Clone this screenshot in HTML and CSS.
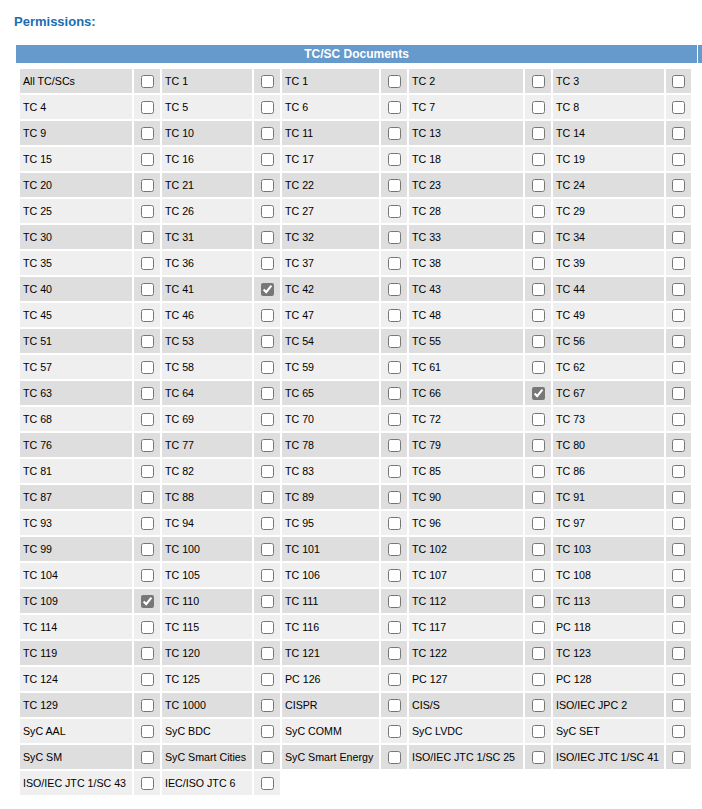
FILE: index.html
```html
<!DOCTYPE html>
<html lang="en">
<head>
    <meta charset="UTF-8">
    <title>Permissions</title>
    <link rel="stylesheet" href="styles.css">
</head>
<body>
    <h2 class="perm-title">Permissions:</h2>

    <div class="doc-head-row">
        <div class="doc-head">TC/SC Documents</div>
        <div class="doc-head-tail"></div>
    </div>

    <!-- TC/SC document permissions -->
    <table class="perm-table">
        <colgroup>
            <col style="width:112px"><col class="col-check">
            <col style="width:90px"><col class="col-check">
            <col style="width:97px"><col class="col-check">
            <col style="width:114px"><col class="col-check">
            <col style="width:111px"><col class="col-check-last">
        </colgroup>
        <tr>
            <td class="perm-name">All TC/SCs</td><td class="perm-check"><input type="checkbox"></td>
            <td class="perm-name">TC 1</td><td class="perm-check"><input type="checkbox"></td>
            <td class="perm-name">TC 1</td><td class="perm-check"><input type="checkbox"></td>
            <td class="perm-name">TC 2</td><td class="perm-check"><input type="checkbox"></td>
            <td class="perm-name">TC 3</td><td class="perm-check"><input type="checkbox"></td>
        </tr>
        <tr>
            <td class="perm-name">TC 4</td><td class="perm-check"><input type="checkbox"></td>
            <td class="perm-name">TC 5</td><td class="perm-check"><input type="checkbox"></td>
            <td class="perm-name">TC 6</td><td class="perm-check"><input type="checkbox"></td>
            <td class="perm-name">TC 7</td><td class="perm-check"><input type="checkbox"></td>
            <td class="perm-name">TC 8</td><td class="perm-check"><input type="checkbox"></td>
        </tr>
        <tr>
            <td class="perm-name">TC 9</td><td class="perm-check"><input type="checkbox"></td>
            <td class="perm-name">TC 10</td><td class="perm-check"><input type="checkbox"></td>
            <td class="perm-name">TC 11</td><td class="perm-check"><input type="checkbox"></td>
            <td class="perm-name">TC 13</td><td class="perm-check"><input type="checkbox"></td>
            <td class="perm-name">TC 14</td><td class="perm-check"><input type="checkbox"></td>
        </tr>
        <tr>
            <td class="perm-name">TC 15</td><td class="perm-check"><input type="checkbox"></td>
            <td class="perm-name">TC 16</td><td class="perm-check"><input type="checkbox"></td>
            <td class="perm-name">TC 17</td><td class="perm-check"><input type="checkbox"></td>
            <td class="perm-name">TC 18</td><td class="perm-check"><input type="checkbox"></td>
            <td class="perm-name">TC 19</td><td class="perm-check"><input type="checkbox"></td>
        </tr>
        <tr>
            <td class="perm-name">TC 20</td><td class="perm-check"><input type="checkbox"></td>
            <td class="perm-name">TC 21</td><td class="perm-check"><input type="checkbox"></td>
            <td class="perm-name">TC 22</td><td class="perm-check"><input type="checkbox"></td>
            <td class="perm-name">TC 23</td><td class="perm-check"><input type="checkbox"></td>
            <td class="perm-name">TC 24</td><td class="perm-check"><input type="checkbox"></td>
        </tr>
        <tr>
            <td class="perm-name">TC 25</td><td class="perm-check"><input type="checkbox"></td>
            <td class="perm-name">TC 26</td><td class="perm-check"><input type="checkbox"></td>
            <td class="perm-name">TC 27</td><td class="perm-check"><input type="checkbox"></td>
            <td class="perm-name">TC 28</td><td class="perm-check"><input type="checkbox"></td>
            <td class="perm-name">TC 29</td><td class="perm-check"><input type="checkbox"></td>
        </tr>
        <tr>
            <td class="perm-name">TC 30</td><td class="perm-check"><input type="checkbox"></td>
            <td class="perm-name">TC 31</td><td class="perm-check"><input type="checkbox"></td>
            <td class="perm-name">TC 32</td><td class="perm-check"><input type="checkbox"></td>
            <td class="perm-name">TC 33</td><td class="perm-check"><input type="checkbox"></td>
            <td class="perm-name">TC 34</td><td class="perm-check"><input type="checkbox"></td>
        </tr>
        <tr>
            <td class="perm-name">TC 35</td><td class="perm-check"><input type="checkbox"></td>
            <td class="perm-name">TC 36</td><td class="perm-check"><input type="checkbox"></td>
            <td class="perm-name">TC 37</td><td class="perm-check"><input type="checkbox"></td>
            <td class="perm-name">TC 38</td><td class="perm-check"><input type="checkbox"></td>
            <td class="perm-name">TC 39</td><td class="perm-check"><input type="checkbox"></td>
        </tr>
        <tr>
            <td class="perm-name">TC 40</td><td class="perm-check"><input type="checkbox"></td>
            <td class="perm-name">TC 41</td><td class="perm-check"><input type="checkbox" checked></td>
            <td class="perm-name">TC 42</td><td class="perm-check"><input type="checkbox"></td>
            <td class="perm-name">TC 43</td><td class="perm-check"><input type="checkbox"></td>
            <td class="perm-name">TC 44</td><td class="perm-check"><input type="checkbox"></td>
        </tr>
        <tr>
            <td class="perm-name">TC 45</td><td class="perm-check"><input type="checkbox"></td>
            <td class="perm-name">TC 46</td><td class="perm-check"><input type="checkbox"></td>
            <td class="perm-name">TC 47</td><td class="perm-check"><input type="checkbox"></td>
            <td class="perm-name">TC 48</td><td class="perm-check"><input type="checkbox"></td>
            <td class="perm-name">TC 49</td><td class="perm-check"><input type="checkbox"></td>
        </tr>
        <tr>
            <td class="perm-name">TC 51</td><td class="perm-check"><input type="checkbox"></td>
            <td class="perm-name">TC 53</td><td class="perm-check"><input type="checkbox"></td>
            <td class="perm-name">TC 54</td><td class="perm-check"><input type="checkbox"></td>
            <td class="perm-name">TC 55</td><td class="perm-check"><input type="checkbox"></td>
            <td class="perm-name">TC 56</td><td class="perm-check"><input type="checkbox"></td>
        </tr>
        <tr>
            <td class="perm-name">TC 57</td><td class="perm-check"><input type="checkbox"></td>
            <td class="perm-name">TC 58</td><td class="perm-check"><input type="checkbox"></td>
            <td class="perm-name">TC 59</td><td class="perm-check"><input type="checkbox"></td>
            <td class="perm-name">TC 61</td><td class="perm-check"><input type="checkbox"></td>
            <td class="perm-name">TC 62</td><td class="perm-check"><input type="checkbox"></td>
        </tr>
        <tr>
            <td class="perm-name">TC 63</td><td class="perm-check"><input type="checkbox"></td>
            <td class="perm-name">TC 64</td><td class="perm-check"><input type="checkbox"></td>
            <td class="perm-name">TC 65</td><td class="perm-check"><input type="checkbox"></td>
            <td class="perm-name">TC 66</td><td class="perm-check"><input type="checkbox" checked></td>
            <td class="perm-name">TC 67</td><td class="perm-check"><input type="checkbox"></td>
        </tr>
        <tr>
            <td class="perm-name">TC 68</td><td class="perm-check"><input type="checkbox"></td>
            <td class="perm-name">TC 69</td><td class="perm-check"><input type="checkbox"></td>
            <td class="perm-name">TC 70</td><td class="perm-check"><input type="checkbox"></td>
            <td class="perm-name">TC 72</td><td class="perm-check"><input type="checkbox"></td>
            <td class="perm-name">TC 73</td><td class="perm-check"><input type="checkbox"></td>
        </tr>
        <tr>
            <td class="perm-name">TC 76</td><td class="perm-check"><input type="checkbox"></td>
            <td class="perm-name">TC 77</td><td class="perm-check"><input type="checkbox"></td>
            <td class="perm-name">TC 78</td><td class="perm-check"><input type="checkbox"></td>
            <td class="perm-name">TC 79</td><td class="perm-check"><input type="checkbox"></td>
            <td class="perm-name">TC 80</td><td class="perm-check"><input type="checkbox"></td>
        </tr>
        <tr>
            <td class="perm-name">TC 81</td><td class="perm-check"><input type="checkbox"></td>
            <td class="perm-name">TC 82</td><td class="perm-check"><input type="checkbox"></td>
            <td class="perm-name">TC 83</td><td class="perm-check"><input type="checkbox"></td>
            <td class="perm-name">TC 85</td><td class="perm-check"><input type="checkbox"></td>
            <td class="perm-name">TC 86</td><td class="perm-check"><input type="checkbox"></td>
        </tr>
        <tr>
            <td class="perm-name">TC 87</td><td class="perm-check"><input type="checkbox"></td>
            <td class="perm-name">TC 88</td><td class="perm-check"><input type="checkbox"></td>
            <td class="perm-name">TC 89</td><td class="perm-check"><input type="checkbox"></td>
            <td class="perm-name">TC 90</td><td class="perm-check"><input type="checkbox"></td>
            <td class="perm-name">TC 91</td><td class="perm-check"><input type="checkbox"></td>
        </tr>
        <tr>
            <td class="perm-name">TC 93</td><td class="perm-check"><input type="checkbox"></td>
            <td class="perm-name">TC 94</td><td class="perm-check"><input type="checkbox"></td>
            <td class="perm-name">TC 95</td><td class="perm-check"><input type="checkbox"></td>
            <td class="perm-name">TC 96</td><td class="perm-check"><input type="checkbox"></td>
            <td class="perm-name">TC 97</td><td class="perm-check"><input type="checkbox"></td>
        </tr>
        <tr>
            <td class="perm-name">TC 99</td><td class="perm-check"><input type="checkbox"></td>
            <td class="perm-name">TC 100</td><td class="perm-check"><input type="checkbox"></td>
            <td class="perm-name">TC 101</td><td class="perm-check"><input type="checkbox"></td>
            <td class="perm-name">TC 102</td><td class="perm-check"><input type="checkbox"></td>
            <td class="perm-name">TC 103</td><td class="perm-check"><input type="checkbox"></td>
        </tr>
        <tr>
            <td class="perm-name">TC 104</td><td class="perm-check"><input type="checkbox"></td>
            <td class="perm-name">TC 105</td><td class="perm-check"><input type="checkbox"></td>
            <td class="perm-name">TC 106</td><td class="perm-check"><input type="checkbox"></td>
            <td class="perm-name">TC 107</td><td class="perm-check"><input type="checkbox"></td>
            <td class="perm-name">TC 108</td><td class="perm-check"><input type="checkbox"></td>
        </tr>
        <tr>
            <td class="perm-name">TC 109</td><td class="perm-check"><input type="checkbox" checked></td>
            <td class="perm-name">TC 110</td><td class="perm-check"><input type="checkbox"></td>
            <td class="perm-name">TC 111</td><td class="perm-check"><input type="checkbox"></td>
            <td class="perm-name">TC 112</td><td class="perm-check"><input type="checkbox"></td>
            <td class="perm-name">TC 113</td><td class="perm-check"><input type="checkbox"></td>
        </tr>
        <tr>
            <td class="perm-name">TC 114</td><td class="perm-check"><input type="checkbox"></td>
            <td class="perm-name">TC 115</td><td class="perm-check"><input type="checkbox"></td>
            <td class="perm-name">TC 116</td><td class="perm-check"><input type="checkbox"></td>
            <td class="perm-name">TC 117</td><td class="perm-check"><input type="checkbox"></td>
            <td class="perm-name">PC 118</td><td class="perm-check"><input type="checkbox"></td>
        </tr>
        <tr>
            <td class="perm-name">TC 119</td><td class="perm-check"><input type="checkbox"></td>
            <td class="perm-name">TC 120</td><td class="perm-check"><input type="checkbox"></td>
            <td class="perm-name">TC 121</td><td class="perm-check"><input type="checkbox"></td>
            <td class="perm-name">TC 122</td><td class="perm-check"><input type="checkbox"></td>
            <td class="perm-name">TC 123</td><td class="perm-check"><input type="checkbox"></td>
        </tr>
        <tr>
            <td class="perm-name">TC 124</td><td class="perm-check"><input type="checkbox"></td>
            <td class="perm-name">TC 125</td><td class="perm-check"><input type="checkbox"></td>
            <td class="perm-name">PC 126</td><td class="perm-check"><input type="checkbox"></td>
            <td class="perm-name">PC 127</td><td class="perm-check"><input type="checkbox"></td>
            <td class="perm-name">PC 128</td><td class="perm-check"><input type="checkbox"></td>
        </tr>
        <tr>
            <td class="perm-name">TC 129</td><td class="perm-check"><input type="checkbox"></td>
            <td class="perm-name">TC 1000</td><td class="perm-check"><input type="checkbox"></td>
            <td class="perm-name">CISPR</td><td class="perm-check"><input type="checkbox"></td>
            <td class="perm-name">CIS/S</td><td class="perm-check"><input type="checkbox"></td>
            <td class="perm-name">ISO/IEC JPC 2</td><td class="perm-check"><input type="checkbox"></td>
        </tr>
        <tr>
            <td class="perm-name">SyC AAL</td><td class="perm-check"><input type="checkbox"></td>
            <td class="perm-name">SyC BDC</td><td class="perm-check"><input type="checkbox"></td>
            <td class="perm-name">SyC COMM</td><td class="perm-check"><input type="checkbox"></td>
            <td class="perm-name">SyC LVDC</td><td class="perm-check"><input type="checkbox"></td>
            <td class="perm-name">SyC SET</td><td class="perm-check"><input type="checkbox"></td>
        </tr>
        <tr>
            <td class="perm-name">SyC SM</td><td class="perm-check"><input type="checkbox"></td>
            <td class="perm-name">SyC Smart Cities</td><td class="perm-check"><input type="checkbox"></td>
            <td class="perm-name">SyC Smart Energy</td><td class="perm-check"><input type="checkbox"></td>
            <td class="perm-name">ISO/IEC JTC 1/SC 25</td><td class="perm-check"><input type="checkbox"></td>
            <td class="perm-name">ISO/IEC JTC 1/SC 41</td><td class="perm-check"><input type="checkbox"></td>
        </tr>
        <tr>
            <td class="perm-name">ISO/IEC JTC 1/SC 43</td><td class="perm-check"><input type="checkbox"></td>
            <td class="perm-name">IEC/ISO JTC 6</td><td class="perm-check"><input type="checkbox"></td>
        </tr>
    </table>
</body>
</html>
```

FILE: styles.css
```css
body {
    font-family: Arial, "Liberation Sans", sans-serif;
    margin: 0;
    overflow: hidden;
    color: #000;
}
.perm-title {
    margin: 0;
    padding: 14px 0 0 14px;
    font-size: 13px;
    line-height: 15px;
    font-weight: bold;
    color: #1a6db3;
}
.doc-head-row {
    display: flex;
    gap: 1px;
    margin: 16px 0 0 16px;
}
.doc-head {
    flex: none;
    width: 681px;
    height: 18px;
    line-height: 18px;
    background-color: #6699cc;
    color: #fff;
    font-size: 12px;
    font-weight: bold;
    text-align: center;
}
.doc-head-tail {
    flex: none;
    width: 10px;
    background-color: #6699cc;
}
.perm-table {
    margin: 4px 0 0 18px;
    border-spacing: 2px;
    table-layout: fixed;
    width: 675px;
}
.col-check {
    width: 26px;
}
.col-check-last {
    width: 25px;
}
.perm-table td {
    height: 24px;
    padding: 0 3px;
    font-size: 8pt;
    white-space: nowrap;
}
.perm-table tr:nth-child(odd) td {
    background-color: #dedede;
}
.perm-table tr:nth-child(even) td {
    background-color: #efefef;
}
.perm-table .perm-check {
    text-align: center;
    padding: 0;
}
.perm-check input {
    margin: 0;
    width: 13px;
    height: 13px;
    vertical-align: middle;
    accent-color: #777;
}
```
